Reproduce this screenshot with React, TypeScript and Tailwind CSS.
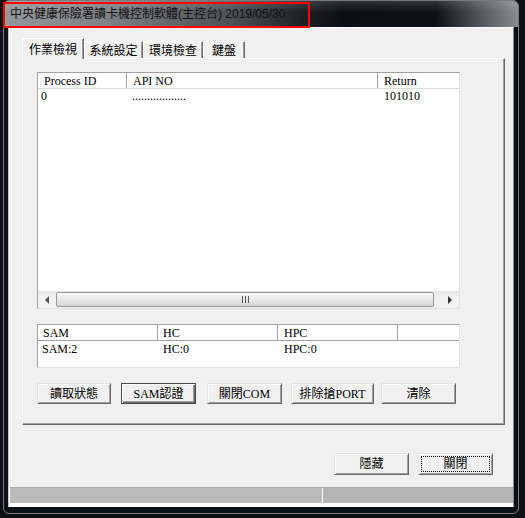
import React from 'react'

const serif = "font-['Liberation_Serif','Noto_Sans_CJK_TC',serif]"
const raised =
  'border border-t-[#e3e3e3] border-l-[#e3e3e3] border-r-[#696969] border-b-[#696969] shadow-[inset_1px_1px_0_#ffffff,inset_-1px_-1px_0_#a0a0a0]'

function Btn({ label, className = '', def = false, focus = false }: { label: string; className?: string; def?: boolean; focus?: boolean }) {
  return (
    <div
      className={`relative flex items-center justify-center bg-[#f0f0f0] text-[12px] leading-none text-black ${serif} ${
        def
          ? 'border border-[#4a4a4a] shadow-[inset_1px_1px_0_#ffffff,inset_-1px_-1px_0_#696969,inset_-2px_-2px_0_#a0a0a0]'
          : raised
      } ${className}`}
    >
      {label}
      {focus && <div className="absolute inset-[2px] border border-dotted border-black" />}
    </div>
  )
}

function Tab({ label, active = false, className = '' }: { label: string; active?: boolean; className?: string }) {
  return (
    <div
      className={`flex items-center justify-center bg-[#f0f0f0] border-t border-l border-r border-t-white border-l-white border-r-[#696969] shadow-[inset_-1px_0_0_#a0a0a0] text-[12px] leading-none text-black font-['Noto_Sans_CJK_TC',sans-serif] ${
        active ? 'h-[21px] relative z-10' : 'h-[17px] mb-[1px]'
      } ${className}`}
    >
      {label}
    </div>
  )
}

function ScrollBar() {
  return (
    <div className="h-[17px] flex bg-[linear-gradient(180deg,#e6e6e6,#f2f2f2_40%,#f2f2f2)]">
      <div className="w-[18px] flex items-center justify-center">
        <div className="w-0 h-0 border-y-[4px] border-y-transparent border-r-[4px] border-r-[#505050]" />
      </div>
      <div className="w-[378px] my-[1px] rounded-[2px] border border-[#979797] bg-[linear-gradient(180deg,#f6f6f6,#e8e8e8_50%,#d6d6d6)] flex items-center justify-center gap-[2px]">
        <div className="w-px h-[7px] bg-[#5a5a5a]" />
        <div className="w-px h-[7px] bg-[#5a5a5a]" />
        <div className="w-px h-[7px] bg-[#5a5a5a]" />
      </div>
      <div className="flex-1" />
      <div className="w-[18px] flex items-center justify-center">
        <div className="w-0 h-0 border-y-[4px] border-y-transparent border-l-[4px] border-l-[#303030]" />
      </div>
    </div>
  )
}

const headCell = 'h-full flex items-center border-r border-[#a0a0a0]'

export default function App() {
  return (
    <div className="w-[525px] h-[518px] bg-[#0c1015] relative overflow-hidden">
      {/* window frame */}
      <div className="ml-[3px] w-[516px] h-[514px] border border-[#777b80] rounded-[6px] overflow-hidden bg-[#0c1015]">
        {/* title bar */}
        <div className="h-[26px] flex items-center pl-[6px] bg-[linear-gradient(180deg,rgba(255,255,255,0.14),rgba(255,255,255,0)_45%),linear-gradient(90deg,#94989c_0%,#7e8286_20%,#4a4e52_45%,#1c2024_58%,#0b0e12_66%,#0e1115_84%,#4d5054_92%,#8a8d90_100%)]">
          <span className="text-[12px] leading-none text-[#121212] font-['Liberation_Sans','Noto_Sans_CJK_TC',sans-serif]">
            中央健康保險署讀卡機控制軟體(主控台) 2019/05/30
          </span>
        </div>

        {/* client area */}
        <div className="ml-[5px] w-[505px] h-[480px] border border-white border-r-[#8c8c8c] bg-[#f0f0f0] shadow-[-1px_0_0_#c4c4c4] flex flex-col">
          <div className="pt-[10px] pl-[12px]">
            {/* tabs */}
            <div className="h-[21px] flex items-end">
              <Tab label="作業檢視" active className="w-[62px]" />
              <Tab label="系統設定" className="w-[59px]" />
              <Tab label="環境檢查" className="w-[60px]" />
              <Tab label="鍵盤" className="w-[42px]" />
            </div>

            {/* tab panel */}
            <div className="-mt-px w-[483px] h-[367px] border border-t-white border-l-white border-r-[#696969] border-b-[#696969] shadow-[inset_-1px_-1px_0_#a0a0a0] pt-[13px] pl-[14px] flex flex-col">
              {/* main list */}
              <div className={`w-[423px] h-[237px] border border-t-[#a0a0a0] border-l-[#a0a0a0] border-r-[#e3e3e3] border-b-[#e3e3e3] bg-white flex flex-col text-[12px] leading-none text-black ${serif}`}>
                <div className="h-[16px] flex border-b border-[#dcdcdc]">
                  <div className={`${headCell} w-[89px] pl-[6px]`}>Process ID</div>
                  <div className={`${headCell} w-[251px] pl-[6px]`}>API NO</div>
                  <div className="h-full flex items-center flex-1 pl-[6px]">Return</div>
                </div>
                <div className="h-[14px] flex items-center">
                  <div className="w-[89px] pl-[3px]">0</div>
                  <div className="w-[251px] pl-[5px]">..................</div>
                  <div className="flex-1 pl-[6px]">101010</div>
                </div>
                <div className="flex-1" />
                <ScrollBar />
              </div>

              {/* reader status list */}
              <div className={`mt-[15px] w-[423px] h-[44px] border border-t-[#a0a0a0] border-l-[#a0a0a0] border-r-[#e3e3e3] border-b-[#e3e3e3] bg-white flex flex-col text-[12px] leading-none text-black ${serif}`}>
                <div className="h-[16px] flex border-b border-[#a0a0a0]">
                  <div className={`${headCell} w-[120px] pl-[5px]`}>SAM</div>
                  <div className={`${headCell} w-[120px] pl-[5px]`}>HC</div>
                  <div className={`${headCell} w-[120px] pl-[6px]`}>HPC</div>
                  <div className="flex-1" />
                </div>
                <div className="h-[15px] flex items-center">
                  <div className="w-[120px] pl-[4px]">SAM:2</div>
                  <div className="w-[120px] pl-[5px]">HC:0</div>
                  <div className="w-[120px] pl-[6px]">HPC:0</div>
                </div>
              </div>

              {/* action buttons */}
              <div className="mt-[15px] h-[21px] flex">
                <Btn label="讀取狀態" className="w-[74px]" />
                <Btn label="SAM認證" def className="ml-[10px] w-[75px]" />
                <Btn label="關閉COM" className="ml-[11px] w-[75px]" />
                <Btn label="排除搶PORT" className="ml-[9px] w-[83px]" />
                <Btn label="清除" className="ml-[7px] w-[75px]" />
              </div>
            </div>
          </div>

          {/* bottom buttons */}
          <div className="mt-[28px] h-[22px] flex justify-end gap-[9px] pr-[20px]">
            <Btn label="隱藏" className="w-[75px]" />
            <Btn label="關閉" focus className="w-[75px]" />
          </div>

          {/* status bar */}
          <div className="mt-[12px] h-[16px] flex border-t border-[#a8a8a8]">
            <div className="w-[313px] bg-[#bababa] border-r border-white" />
            <div className="flex-1 bg-[#b4b4b4]" />
          </div>
          <div className="h-[3px] bg-white" />
        </div>
      </div>

      {/* red highlight around title */}
      <div className="absolute left-[3px] top-[2px] w-[307px] h-[26px] border-2 border-[#ff0000]" />
    </div>
  )
}
